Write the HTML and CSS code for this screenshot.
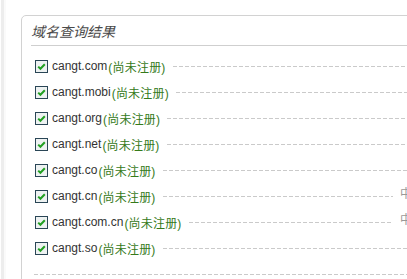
FILE: index.html
```html
<!DOCTYPE html>
<html lang="zh-CN">
<head>
  <meta charset="UTF-8">
  <title>域名查询结果</title>
  <link rel="stylesheet" href="styles.css">
</head>
<body>
  <div class="panel">
    <div class="panel-title">域名查询结果</div>

    <ul class="result-list">
      <li class="row">
        <svg class="check" width="13" height="13" viewBox="0 0 13 13"><rect x="0.5" y="0.5" width="12" height="12" fill="#eef2f2" stroke="#2a4656"/><path d="M3.2 6.6 L5.4 8.8 L9.8 4.2" fill="none" stroke="#22a022" stroke-width="2"/></svg>
        <span class="domain">cangt.com</span><span class="status">(尚未注册)</span>
        <span class="dots"></span>
      </li>
      <li class="row">
        <svg class="check" width="13" height="13" viewBox="0 0 13 13"><rect x="0.5" y="0.5" width="12" height="12" fill="#eef2f2" stroke="#2a4656"/><path d="M3.2 6.6 L5.4 8.8 L9.8 4.2" fill="none" stroke="#22a022" stroke-width="2"/></svg>
        <span class="domain">cangt.mobi</span><span class="status">(尚未注册)</span>
        <span class="dots"></span>
      </li>
      <li class="row">
        <svg class="check" width="13" height="13" viewBox="0 0 13 13"><rect x="0.5" y="0.5" width="12" height="12" fill="#eef2f2" stroke="#2a4656"/><path d="M3.2 6.6 L5.4 8.8 L9.8 4.2" fill="none" stroke="#22a022" stroke-width="2"/></svg>
        <span class="domain">cangt.org</span><span class="status">(尚未注册)</span>
        <span class="dots"></span>
      </li>
      <li class="row">
        <svg class="check" width="13" height="13" viewBox="0 0 13 13"><rect x="0.5" y="0.5" width="12" height="12" fill="#eef2f2" stroke="#2a4656"/><path d="M3.2 6.6 L5.4 8.8 L9.8 4.2" fill="none" stroke="#22a022" stroke-width="2"/></svg>
        <span class="domain">cangt.net</span><span class="status">(尚未注册)</span>
        <span class="dots"></span>
      </li>
      <li class="row">
        <svg class="check" width="13" height="13" viewBox="0 0 13 13"><rect x="0.5" y="0.5" width="12" height="12" fill="#eef2f2" stroke="#2a4656"/><path d="M3.2 6.6 L5.4 8.8 L9.8 4.2" fill="none" stroke="#22a022" stroke-width="2"/></svg>
        <span class="domain">cangt.co</span><span class="status">(尚未注册)</span>
        <span class="dots"></span>
      </li>
      <li class="row">
        <svg class="check" width="13" height="13" viewBox="0 0 13 13"><rect x="0.5" y="0.5" width="12" height="12" fill="#eef2f2" stroke="#2a4656"/><path d="M3.2 6.6 L5.4 8.8 L9.8 4.2" fill="none" stroke="#22a022" stroke-width="2"/></svg>
        <span class="domain">cangt.cn</span><span class="status">(尚未注册)</span>
        <span class="dots"></span>
        <span class="note">中</span>
      </li>
      <li class="row">
        <svg class="check" width="13" height="13" viewBox="0 0 13 13"><rect x="0.5" y="0.5" width="12" height="12" fill="#eef2f2" stroke="#2a4656"/><path d="M3.2 6.6 L5.4 8.8 L9.8 4.2" fill="none" stroke="#22a022" stroke-width="2"/></svg>
        <span class="domain">cangt.com.cn</span><span class="status">(尚未注册)</span>
        <span class="dots"></span>
        <span class="note">中</span>
      </li>
      <li class="row">
        <svg class="check" width="13" height="13" viewBox="0 0 13 13"><rect x="0.5" y="0.5" width="12" height="12" fill="#eef2f2" stroke="#2a4656"/><path d="M3.2 6.6 L5.4 8.8 L9.8 4.2" fill="none" stroke="#22a022" stroke-width="2"/></svg>
        <span class="domain">cangt.so</span><span class="status">(尚未注册)</span>
        <span class="dots"></span>
      </li>
    </ul>

    <div class="list-end"></div>
  </div>
</body>
</html>
```

FILE: styles.css
```css
html {
  overflow: hidden;
  background: linear-gradient(to right, #fff 0 1px, #ededed 1px 4px, #fafafa 4px 6px, #fff 6px);
}
body {
  margin: 0;
  padding: 15px 0 0 21px;
  font-family: "Liberation Sans", Arial, "Noto Sans CJK SC", sans-serif;
  font-size: 12px;
  color: #333;
}

.panel {
  width: 420px;
  height: 300px;
  border: 1px solid #d2d2d2;
  border-radius: 5px;
}

.panel-title {
  margin: 0 0 0 9px;
  padding-top: 1px;
  height: 28px;
  line-height: 28px;
  border-bottom: 1px solid #cfcfcf;
  font-family: "Noto Sans CJK SC", sans-serif;
  font-size: 14px;
  font-style: italic;
  color: #4a4a4a;
}

.result-list {
  list-style: none;
  margin: 7px 0 0;
  padding: 0 0 0 13px;
  width: 377px;
}

.row {
  display: flex;
  align-items: center;
  height: 26px;
}

.check {
  flex: none;
  margin-right: 4px;
}

.domain {
  color: #333;
  white-space: nowrap;
}

.status {
  margin-left: 1px;
  color: #357a1a;
  white-space: nowrap;
  letter-spacing: 0.2px;
}

.dots {
  flex: 1;
  height: 1px;
  margin-left: 7px;
  background: repeating-linear-gradient(to right, #cacaca 0 4px, transparent 4px 6px);
}

.note {
  margin-left: 7px;
  color: #999;
  font-family: "Noto Sans CJK SC", sans-serif;
  position: relative;
  top: -4px;
}

.list-end {
  margin: 13px 0 0 12px;
  height: 1px;
  background: repeating-linear-gradient(to right, #cacaca 0 4px, transparent 4px 6px);
}
```
